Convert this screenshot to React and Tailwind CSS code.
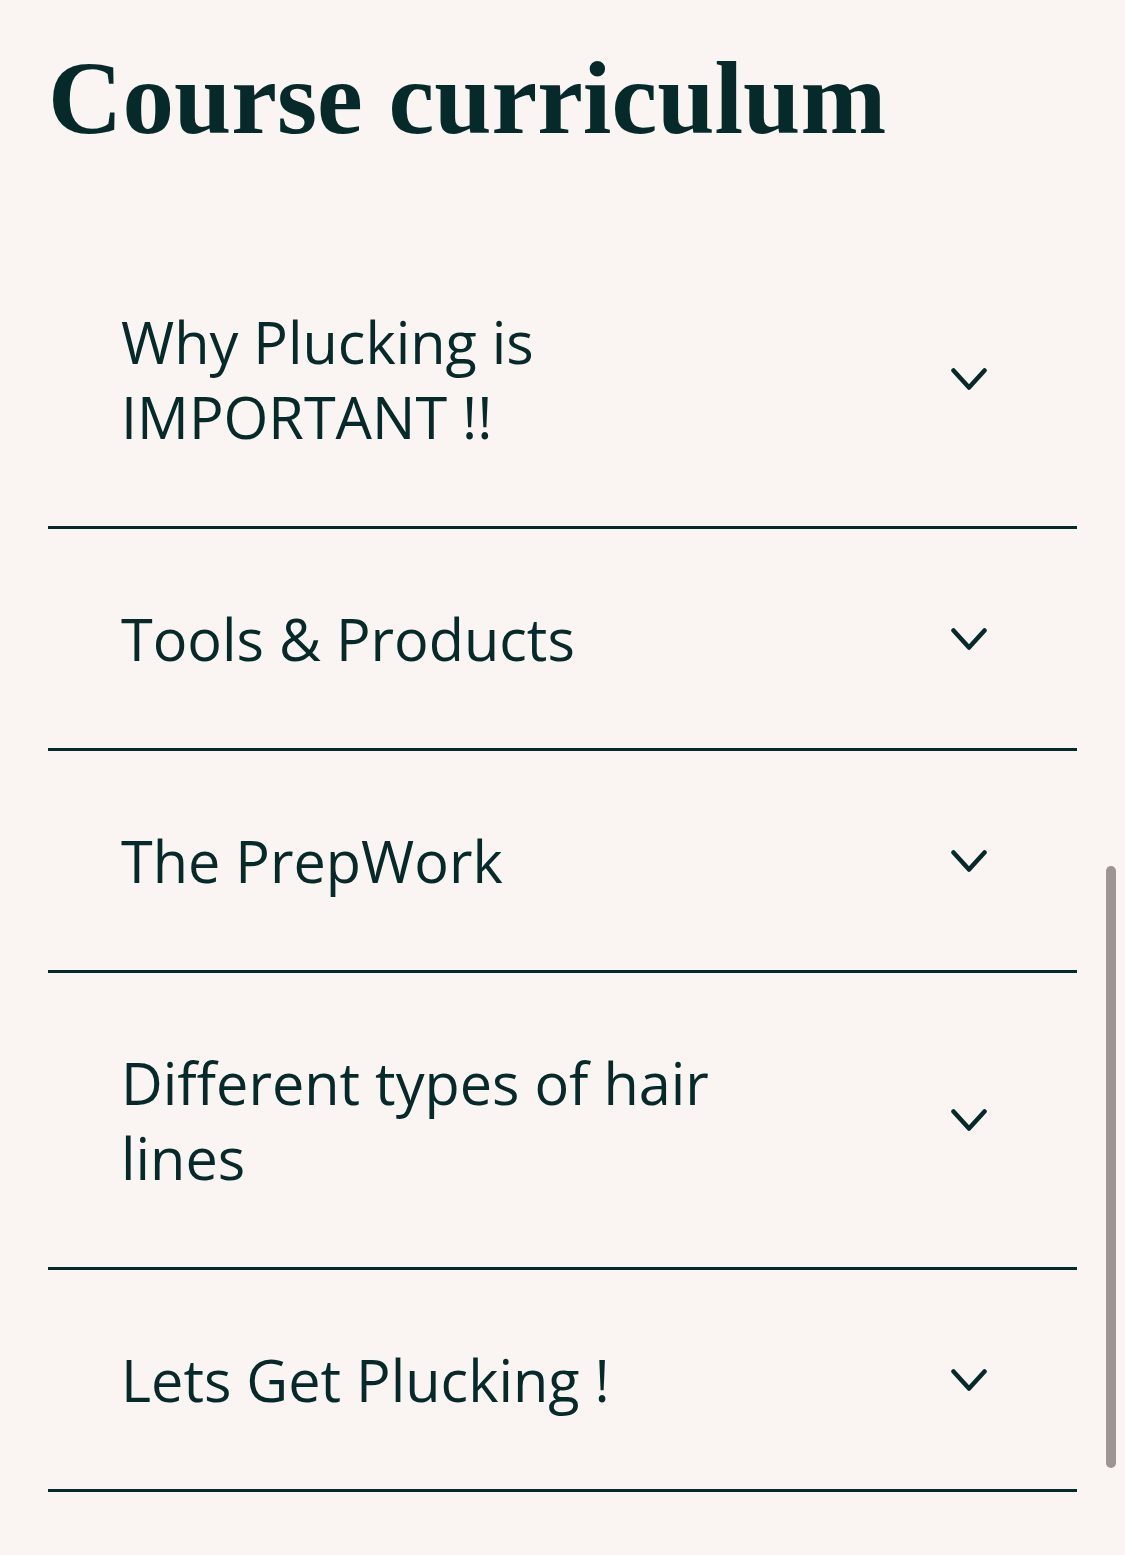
import React from "react";

const items = [
  "Why Plucking is IMPORTANT !!",
  "Tools & Products",
  "The PrepWork",
  "Different types of hair lines",
  "Lets Get Plucking !",
];

function Chevron() {
  return (
    <svg width="36" height="22" viewBox="0 0 36 22" fill="none" className="shrink-0">
      <path d="M2.5 2.5 L18 19.5 L33.5 2.5" stroke="#062a2a" strokeWidth="4.5" strokeLinecap="round" strokeLinejoin="round" />
    </svg>
  );
}

export default function App() {
  return (
    <div className="relative min-h-[1555px] w-full bg-[#faf5f2] text-[#062a2a] overflow-hidden">
      <div className="px-[48px] pr-[48px]">
        <h1
          className="h-[232px] pt-[37px] text-[103px] leading-[1.2] font-bold whitespace-nowrap"
          style={{ fontFamily: '"Liberation Serif", "DejaVu Serif", serif' }}
        >
          Course curriculum
        </h1>
        <div>
          {items.map((t) => (
            <div
              key={t}
              className="flex items-center justify-between border-b-[3px] border-[#062a2a] py-[72px] pl-[73px] pr-[90px]"
            >
              <div
                className="w-[660px] text-[57.6px] leading-[75px] font-medium"
                style={{ fontFamily: '"Open Sans", sans-serif' }}
              >
                {t}
              </div>
              <Chevron />
            </div>
          ))}
        </div>
      </div>
      <div className="absolute left-[1106px] top-[866px] h-[602px] w-[10px] rounded-full bg-[#9c9593]" />
    </div>
  );
}
